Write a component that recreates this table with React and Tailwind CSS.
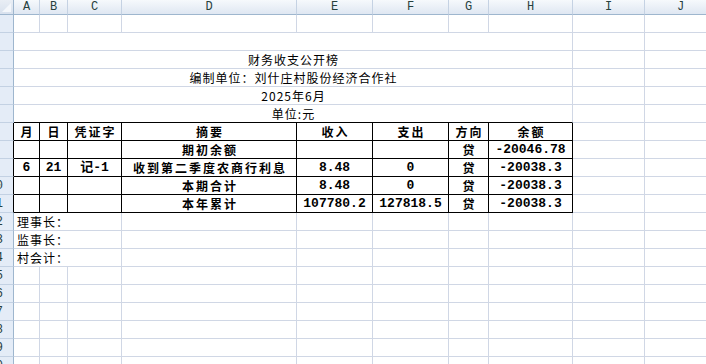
import React from "react";

const GRID = "border-[#d0d7e5]";
const BLK = "border-black";
const CJK = "font-['Noto_Sans_CJK_SC',sans-serif]";
const MONO = "font-['Liberation_Mono','Noto_Sans_CJK_SC',monospace]";

const colLetters = ["A", "B", "C", "D", "E", "F", "G", "H", "I", "J"];

function RowHead({ n, dark }) {
  return (
    <div
      className={`h-[18px] flex items-center justify-end overflow-hidden whitespace-nowrap pr-[10px] bg-[#e4ecf7] border-b border-r border-b-[#c3d1e3] ${
        dark ? "border-r-black" : "border-r-[#9eb6ce]"
      } text-[12px] leading-none text-[#27413e] font-['Liberation_Mono',monospace]`}
    >
      {n >= 10 ? n : ""}
    </div>
  );
}

function C({ span = "", cls = GRID, align = "justify-center", children }) {
  return (
    <div
      className={`h-[18px] border-r border-b flex items-center overflow-hidden whitespace-nowrap ${align} ${span} ${cls}`}
    >
      {children}
    </div>
  );
}

function Plain({ count }) {
  return Array.from({ length: count }).map((_, i) => <C key={i} />);
}

function Head({ children }) {
  return (
    <C cls={BLK}>
      <span className={`${CJK} font-bold text-[12px] tracking-[2px] pl-[2px] text-black`}>{children}</span>
    </C>
  );
}

function TB({ children, mono }) {
  return (
    <C cls={BLK}>
      <span
        className={
          mono
            ? `${MONO} font-bold text-[13px] text-black`
            : `${CJK} font-bold text-[12px] tracking-[2px] pl-[2px] text-black`
        }
      >
        {children}
      </span>
    </C>
  );
}

function Title({ children, last }) {
  return (
    <C span="col-span-8" cls={last ? "border-r-[#d0d7e5] border-b-black" : GRID}>
      <span className={`${CJK} text-[12px] tracking-[1px] pl-[1px] text-black`}>{children}</span>
    </C>
  );
}

function Sign({ children }) {
  return (
    <C span="col-span-3" align="justify-start">
      <span className={`${CJK} text-[12px] tracking-[1px] pl-[3px] text-black`}>{children}</span>
    </C>
  );
}

function TableRow({ cells }) {
  return cells.map((c, i) => (
    <TB key={i} mono={c.mono}>
      {c.t}
    </TB>
  ));
}

export default function App() {
  const rows = [];
  let n = 1;
  const push = (content, dark) => {
    rows.push(
      <React.Fragment key={n}>
        <RowHead n={n} dark={dark} />
        {content}
      </React.Fragment>
    );
    n++;
  };

  push(<Plain count={10} />);
  push(
    <>
      <Title />
      <Plain count={2} />
    </>
  );
  push(
    <>
      <Title>财务收支公开榜</Title>
      <Plain count={2} />
    </>
  );
  push(
    <>
      <Title>编制单位：刘什庄村股份经济合作社</Title>
      <Plain count={2} />
    </>
  );
  push(
    <>
      <Title>2025年6月</Title>
      <Plain count={2} />
    </>
  );
  push(
    <>
      <Title last>单位:元</Title>
      <Plain count={2} />
    </>
  );
  push(
    <>
      {["月", "日", "凭证字", "摘要", "收入", "支出", "方向", "余额"].map((h) => (
        <Head key={h}>{h}</Head>
      ))}
      <Plain count={2} />
    </>,
    true
  );
  const tdata = [
    [{ t: "" }, { t: "" }, { t: "" }, { t: "期初余额" }, { t: "" }, { t: "" }, { t: "贷" }, { t: "-20046.78", mono: true }],
    [
      { t: "6", mono: true },
      { t: "21", mono: true },
      { t: "记-1", mono: true },
      { t: "收到第二季度农商行利息" },
      { t: "8.48", mono: true },
      { t: "0", mono: true },
      { t: "贷" },
      { t: "-20038.3", mono: true },
    ],
    [{ t: "" }, { t: "" }, { t: "" }, { t: "本期合计" }, { t: "8.48", mono: true }, { t: "0", mono: true }, { t: "贷" }, { t: "-20038.3", mono: true }],
    [
      { t: "" },
      { t: "" },
      { t: "" },
      { t: "本年累计" },
      { t: "107780.2", mono: true },
      { t: "127818.5", mono: true },
      { t: "贷" },
      { t: "-20038.3", mono: true },
    ],
  ];
  tdata.forEach((r) =>
    push(
      <>
        <TableRow cells={r} />
        <Plain count={2} />
      </>,
      true
    )
  );
  ["理事长：", "监事长：", "村会计："].forEach((s) =>
    push(
      <>
        <Sign>{s}</Sign>
        <Plain count={7} />
      </>
    )
  );
  while (n <= 20) push(<Plain count={10} />);

  return (
    <div className="w-[706px] h-[364px] overflow-hidden bg-white">
      <div className="grid grid-cols-[14px_26px_28px_54px_175px_76px_76px_40px_84px_72px_72px] w-[717px]">
        <div className="h-[15px] bg-gradient-to-b from-[#e9eef5] to-[#d8e1ee] border-r border-b border-[#9eb6ce] flex items-end justify-end">
          <svg width="11" height="11" viewBox="0 0 11 11" className="mb-[1px] mr-[1px]">
            <polygon points="10,1 10,10 1,10" fill="#f4f7fb" />
          </svg>
        </div>
        {colLetters.map((l) => (
          <div
            key={l}
            className="h-[15px] bg-gradient-to-b from-[#f6f9fc] to-[#dfe7f2] border-r border-r-[#c5d2e3] border-b border-b-[#9eb6ce] flex items-center justify-center text-[12px] leading-none text-[#27413e] font-['Liberation_Mono',monospace]"
          >
            {l}
          </div>
        ))}
        {rows}
      </div>
    </div>
  );
}
